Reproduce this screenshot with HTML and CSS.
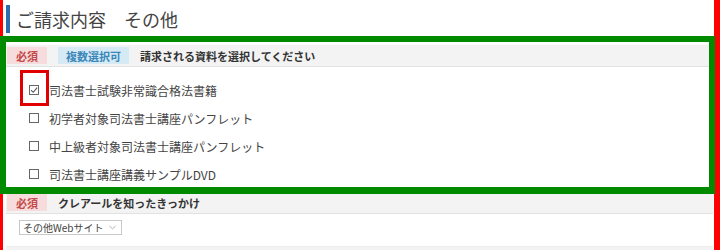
FILE: index.html
```html
<!DOCTYPE html>
<html lang="ja">
<head>
<meta charset="utf-8">
<link rel="stylesheet" href="styles.css">
</head>
<body>
<div class="page">
  <h1 class="title">ご請求内容　その他</h1>

  <section class="sec">
    <div class="sec-head">
      <span class="badge req">必須</span>
      <span class="badge multi">複数選択可</span>
      <span class="sec-label">請求される資料を選択してください</span>
    </div>
    <div class="sec-body items">
      <label class="item"><span class="cb checked"><svg viewBox="0 0 10 10" width="10" height="10"><path d="M2 5.2 L4.2 7.3 L8.2 2.6" fill="none" stroke="#555" stroke-width="1.1"/></svg></span>司法書士試験非常識合格法書籍</label>
      <label class="item"><span class="cb"></span>初学者対象司法書士講座パンフレット</label>
      <label class="item"><span class="cb"></span>中上級者対象司法書士講座パンフレット</label>
      <label class="item"><span class="cb"></span>司法書士講座講義サンプルDVD</label>
    </div>
  </section>

  <section class="sec">
    <div class="sec-head">
      <span class="badge req">必須</span>
      <span class="sec-label">クレアールを知ったきっかけ</span>
    </div>
    <div class="sec-body sel-body">
      <div class="select"><span class="sel-text">その他Webサイト</span><svg class="chev" viewBox="0 0 8 5" width="7" height="5"><path d="M0.5 0.8 L4 4 L7.5 0.8" fill="none" stroke="#999" stroke-width="0.9"/></svg></div>
    </div>
  </section>
  <div class="next"></div>

  <div class="mark red-left"></div>
  <div class="mark red-right"></div>
  <div class="mark green-box"></div>
  <div class="mark red-box"></div>
</div>
</body>
</html>
```

FILE: styles.css
```css
html, body {
  margin: 0;
  padding: 0;
  background: #fff;
}
body {
  width: 720px;
  height: 250px;
  overflow: hidden;
  font-family: "Noto Sans CJK JP", "Noto Sans", sans-serif;
  color: #444;
}
.page {
  position: relative;
  width: 720px;
  height: 250px;
  box-sizing: border-box;
  padding: 5px 7px 0 6px;
}
.title {
  margin: 0 0 12px 0;
  height: 28px;
  border-left: 4px solid #2f6ca8;
  padding-left: 6px;
  font-size: 18px;
  line-height: 28px;
  font-weight: normal;
  color: #444;
}
.sec-head {
  display: flex;
  align-items: center;
  gap: 11px;
  height: 21px;
  background: #f3f3f3;
  border-bottom: 1px solid #e2e2e2;
  padding-left: 1px;
}
.badge {
  display: inline-flex;
  align-items: center;
  justify-content: center;
  height: 17px;
  font-size: 11px;
  font-weight: bold;
  padding: 0 9px;
  white-space: nowrap;
}
.req {
  background: #f6dcdc;
  color: #c44a4a;
}
.multi {
  background: #d6eaf6;
  color: #3a86b8;
  padding: 0 8px;
}
.sec-label {
  font-size: 11px;
  font-weight: bold;
  color: #333;
  white-space: nowrap;
}
.items {
  display: flex;
  flex-direction: column;
  padding: 9px 0 4px 23px;
}
.item {
  display: flex;
  align-items: center;
  height: 28px;
  font-size: 12px;
  color: #444;
  white-space: nowrap;
}
.cb {
  width: 8px;
  height: 8px;
  border: 1px solid #666;
  margin-right: 10px;
  display: inline-flex;
  align-items: center;
  justify-content: center;
  background: #fff;
}
.cb svg {
  flex: none;
}
.sel-body {
  padding: 6px 0 11px 13px;
  border-bottom: 1px solid #ececec;
}
.select {
  display: flex;
  align-items: center;
  box-sizing: border-box;
  width: 103px;
  height: 15px;
  border: 1px solid #c8c8c8;
  font-size: 10px;
  color: #444;
  padding-left: 3px;
  overflow: hidden;
}
.sel-text {
  white-space: nowrap;
  line-height: 13px;
}
.chev {
  flex: none;
  margin-left: auto;
  margin-right: 5px;
}
.next {
  height: 4px;
  background: #f3f3f3;
}
.mark {
  position: absolute;
  box-sizing: border-box;
}
.red-left {
  left: 0;
  top: 0;
  width: 3px;
  height: 250px;
  background: #ff0000;
}
.red-right {
  right: 0;
  top: 0;
  width: 6px;
  height: 250px;
  background: #ff0000;
}
.green-box {
  left: 0;
  top: 36px;
  width: 715px;
  height: 158px;
  border: 6px solid #008a00;
  border-bottom-width: 7px;
}
.red-box {
  left: 20px;
  top: 70px;
  width: 29px;
  height: 36px;
  border: 3px solid #e00000;
}
```
